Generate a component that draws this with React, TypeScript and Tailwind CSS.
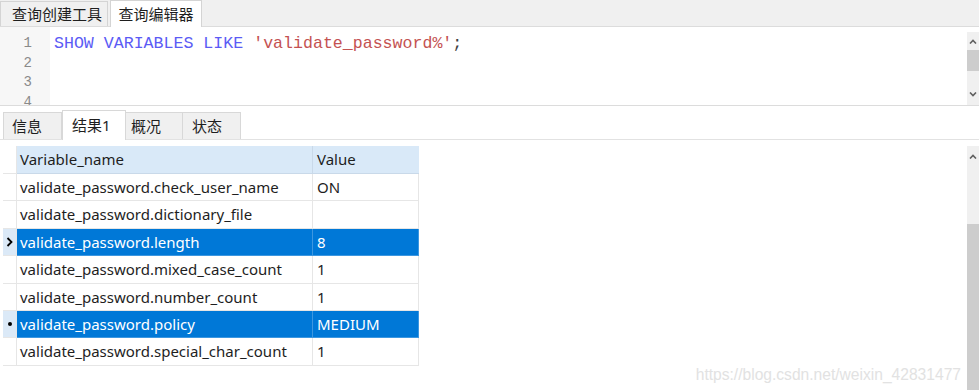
import React from "react";

const rows = [
  { name: "validate_password.check_user_name", value: "ON", sel: false, mark: "" },
  { name: "validate_password.dictionary_file", value: "", sel: false, mark: "" },
  { name: "validate_password.length", value: "8", sel: true, mark: "arrow" },
  { name: "validate_password.mixed_case_count", value: "1", sel: false, mark: "" },
  { name: "validate_password.number_count", value: "1", sel: false, mark: "" },
  { name: "validate_password.policy", value: "MEDIUM", sel: true, mark: "dot" },
  { name: "validate_password.special_char_count", value: "1", sel: false, mark: "" },
];

const ui = "font-['Noto_Sans','Noto_Sans_CJK_SC',sans-serif]";

function Chevron({ up }: { up: boolean }) {
  return (
    <svg width="8" height="5" viewBox="0 0 8 5" fill="none">
      <path d={up ? "M1 4.5L4 1.5L7 4.5" : "M1 0.5L4 3.5L7 0.5"} stroke="#606060" strokeWidth="1.6" />
    </svg>
  );
}

export default function App() {
  return (
    <div className={`w-[979px] h-[390px] bg-white overflow-hidden flex flex-col ${ui} text-[15px] text-[#1e1e1e]`}>
      {/* query tabs */}
      <div className="h-[27px] bg-[#f0f0f0] flex items-end border-b border-[#dcdcdc] shrink-0">
        <div className="h-[25px] w-[108px] flex items-center pl-[11px] border border-b-0 border-[#d4d4d4] bg-[#f0f0f0]">
          查询创建工具
        </div>
        <div className="h-[27px] w-[92px] ml-[2px] -mb-[1px] flex items-center justify-center bg-white border border-b-0 border-[#d4d4d4]">
          查询编辑器
        </div>
      </div>

      {/* editor */}
      <div className="h-[79px] flex shrink-0 border-b border-[#dcdcdc] overflow-hidden">
        <div className="w-[50px] bg-[#f7f7f7] pt-[7px] pr-[18px] flex flex-col items-end font-['Liberation_Mono',monospace] text-[14px] text-[#8a8a8a] leading-[19.5px]">
          <span>1</span>
          <span>2</span>
          <span>3</span>
          <span>4</span>
        </div>
        <div className="flex-1 pl-[4px] pt-[7px] font-['Liberation_Mono',monospace] text-[16.6px] leading-[19.5px] whitespace-pre">
          <span className="text-[#5b5bf5]">SHOW VARIABLES LIKE </span>
          <span className="text-[#c45252]">'validate_password%'</span>
          <span className="text-[#404040]">;</span>
        </div>
        <div className="w-[12px] mt-[5px] bg-[#f0f0f0] flex flex-col items-center">
          <div className="h-[18px] flex items-center justify-center"><Chevron up /></div>
          <div className="h-[21px] w-full bg-[#cdcdcd]" />
          <div className="flex-1" />
          <div className="h-[22px] flex items-center justify-center"><Chevron up={false} /></div>
        </div>
      </div>

      {/* result tabs */}
      <div className="h-[34px] pt-[3px] pl-[3px] flex items-end border-b border-[#e2e2e2] shrink-0">
        <div className="h-[27px] w-[59px] flex items-center pl-[8px] bg-[#f0f0f0] border border-b-0 border-[#d8d8d8]">信息</div>
        <div className="h-[30px] w-[64px] -mb-[1px] flex items-center pl-[9px] bg-white border border-b-0 border-[#d8d8d8]">结果1</div>
        <div className="h-[27px] w-[57px] flex items-center pl-[5px] bg-[#f0f0f0] border border-b-0 border-l-0 border-[#d8d8d8]">概况</div>
        <div className="h-[27px] w-[58px] flex items-center pl-[9px] bg-[#f0f0f0] border border-b-0 border-l-0 border-[#d8d8d8]">状态</div>
      </div>

      {/* grid */}
      <div className="flex-1 flex pt-[6px] relative">
        <div className="flex-1 pl-[3px]">
          <div className="flex h-[28px] w-fit">
            <div className="w-[14px] bg-white border-b border-r border-[#e6e6e6]" />
            <div className="w-[296px] pl-[3px] flex items-center bg-[#d9e9f8] border-b border-r border-[#c9d9e9]">Variable_name</div>
            <div className="w-[106px] pl-[4px] flex items-center bg-[#d9e9f8] border-b border-[#c9d9e9]">Value</div>
          </div>
          {rows.map((r) => (
            <div key={r.name} className="flex h-[27.4px] w-fit">
              <div className={`w-[14px] flex items-center justify-center border-b border-r border-[#e6e6e6] ${r.sel ? "bg-[#dbe9f7]" : "bg-white"}`}>
                {r.mark === "arrow" && (
                  <svg width="7" height="10" viewBox="0 0 7 10" fill="none">
                    <path d="M1.5 1L5.5 5L1.5 9" stroke="#000" strokeWidth="1.8" />
                  </svg>
                )}
                {r.mark === "dot" && <span className="w-[4px] h-[4px] rounded-full bg-black" />}
              </div>
              <div className={`w-[296px] pl-[3px] flex items-center border-b border-r ${r.sel ? "bg-[#0078d7] text-white border-[#3d97e0]" : "border-[#e6e6e6]"}`}>
                {r.name}
              </div>
              <div className={`w-[106px] pl-[4px] flex items-center border-b border-r ${r.sel ? "bg-[#0078d7] text-white border-[#3d97e0]" : "border-[#e6e6e6]"}`}>
                {r.value}
              </div>
            </div>
          ))}
        </div>
        <div className="w-[12px] bg-[#f0f0f0] flex flex-col items-center">
          <div className="h-[20px] flex items-center justify-center"><Chevron up /></div>
          <div className="h-[58px]" />
          <div className="flex-1 w-full bg-[#cdcdcd]" />
        </div>
        <div className="absolute right-[18px] bottom-[4px] text-[15.6px] text-[#e2e2e2] font-['Liberation_Sans',sans-serif]">
          https://blog.csdn.net/weixin_42831477
        </div>
      </div>
    </div>
  );
}
